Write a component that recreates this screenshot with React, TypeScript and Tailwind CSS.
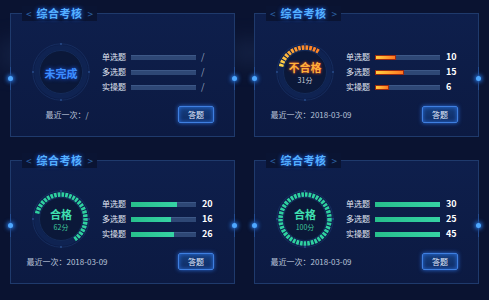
import React from 'react';

type Status = 'none' | 'fail' | 'pass';

interface Exam {
  status: Status;
  label: string;
  score?: string;
  ring: number;
  values: string[];
  pcts: number[];
  date: string;
}

const exams: Exam[] = [
  { status: 'none', label: '未完成', ring: 0, values: ['/', '/', '/'], pcts: [0, 0, 0], date: '/' },
  { status: 'fail', label: '不合格', score: '31分', ring: 0.31, values: ['10', '15', '6'], pcts: [0.32, 0.45, 0.21], date: '2018-03-09' },
  { status: 'pass', label: '合格', score: '62分', ring: 0.62, values: ['20', '16', '26'], pcts: [0.7, 0.62, 0.66], date: '2018-03-09' },
  { status: 'pass', label: '合格', score: '100分', ring: 1, values: ['30', '25', '45'], pcts: [1, 1, 1], date: '2018-03-09' },
];

const rows = ['单选题', '多选题', '实操题'];

// arc from -77deg (measured clockwise from 12 o'clock)
const arcPath = (pct: number, cx: number, cy: number, r: number) => {
  const a0 = ((-77 - 90) * Math.PI) / 180;
  const a1 = a0 + pct * 2 * Math.PI;
  const x0 = cx + r * Math.cos(a0);
  const y0 = cy + r * Math.sin(a0);
  const x1 = cx + r * Math.cos(a1);
  const y1 = cy + r * Math.sin(a1);
  const large = pct > 0.5 ? 1 : 0;
  return `M ${x0} ${y0} A ${r} ${r} 0 ${large} 1 ${x1} ${y1}`;
};

const Ring: React.FC<{ exam: Exam; id: number }> = ({ exam, id }) => {
  const color = exam.status === 'fail' ? `url(#g${id})` : '#2fd19f';
  return (
    <div className="relative w-[58px] h-[58px] shrink-0">
      <svg width="58" height="58" viewBox="0 0 58 58" className="absolute inset-0">
        <defs>
          <linearGradient id={`g${id}`} x1="0" y1="1" x2="1" y2="0">
            <stop offset="0" stopColor="#ffd84a" />
            <stop offset="1" stopColor="#ff7a22" />
          </linearGradient>
        </defs>
        <circle cx="29" cy="29" r="28.2" fill="none" stroke="#1a3468" strokeWidth="0.7" />
        <circle cx="29" cy="29" r="24.5" fill="none" stroke="#0f2352" strokeWidth="5" />
        <circle cx="29" cy="29" r="21.5" fill="#0b1839" stroke="#17305f" strokeWidth="0.8" />
        {exam.ring >= 1 ? (
          <circle cx="29" cy="29" r="24.5" fill="none" stroke={color} strokeWidth="4.5" strokeDasharray="2.6 1.1" />
        ) : exam.ring > 0 ? (
          <path d={arcPath(exam.ring, 29, 29, 24.5)} fill="none" stroke={color} strokeWidth="4.5" strokeDasharray="2.6 1.1" />
        ) : null}
        <circle cx="29" cy="1" r="0.9" fill="#2b4f90" />
        <circle cx="29" cy="57" r="0.9" fill="#2b4f90" />
        <circle cx="1" cy="29" r="0.9" fill="#2b4f90" />
        <circle cx="57" cy="29" r="0.9" fill="#2b4f90" />
      </svg>
      <div className="absolute inset-0 flex flex-col items-center justify-center pt-[2px]">
        {exam.status === 'none' && (
          <span className="block text-[11px] leading-[13px] font-bold text-[#3d8fff] [text-shadow:0_0_4px_#1f5fff]">{exam.label}</span>
        )}
        {exam.status === 'fail' && (
          <>
            <span className="block text-[11px] leading-[13px] font-bold text-[#ffb03a] [text-shadow:0_0_3px_#ff4a1a]">{exam.label}</span>
            <span className="block mt-[2px] text-[7px] leading-[9px] text-[#c9cfdc]">{exam.score}</span>
          </>
        )}
        {exam.status === 'pass' && (
          <>
            <span className="block text-[11px] leading-[13px] font-bold text-[#3fe0b0]">{exam.label}</span>
            <span className="block mt-[2px] text-[7px] leading-[9px] text-[#3fc79c]">{exam.score}</span>
          </>
        )}
      </div>
    </div>
  );
};

const SideDot: React.FC<{ side: 'left' | 'right' }> = ({ side }) => (
  <div
    className={`absolute top-[53px] ${side === 'left' ? 'left-[-3px]' : 'right-[-3px]'} flex flex-col items-center w-[5px]`}
  >
    <div className="w-px h-[7px] bg-[#234c90]" />
    <div className="w-[5px] h-[5px] rounded-full bg-[#4fa8ff] shadow-[0_0_4px_1px_#2a7ff0] my-[2px]" />
    <div className="w-px h-[7px] bg-[#234c90]" />
  </div>
);

const Card: React.FC<{ exam: Exam; id: number }> = ({ exam, id }) => (
  <div className="relative w-[225px] h-[124px] border border-[#1f3a6c] bg-gradient-to-b from-[#0e1f4c] to-[#0c1a42]">
    <div className="absolute top-[-8px] left-[11px] h-[15px] px-[4px] flex items-center gap-[5px] bg-[#0a1433]">
      <span className="text-[10px] text-[#2f64a8]">&lt;</span>
      <span className="text-[11px] font-bold tracking-[0.5px] text-[#55b0ff] [text-shadow:0_0_4px_#1d6bff]">综合考核</span>
      <span className="text-[10px] text-[#2f64a8]">&gt;</span>
    </div>
    <SideDot side="left" />
    <SideDot side="right" />

    <div className="flex items-center pl-[21px] pt-[29px]">
      <Ring exam={exam} id={id} />
      <div className="ml-[12px] flex flex-col">
        {rows.map((r, i) => (
          <div key={r} className="h-[15px] flex items-center">
            <span className="w-[29px] text-[8px] text-[#e2e8f4]">{r}</span>
            <div className="relative w-[65px] h-[5px] bg-[#2e4775] border-t border-[#3d5887]">
              {exam.pcts[i] > 0 && (
                <div
                  className={
                    exam.status === 'fail'
                      ? 'absolute left-0 top-[-1px] h-[5px] bg-gradient-to-r from-[#ffd040] to-[#ff7420] border border-[#9a2a12]'
                      : 'absolute left-0 top-[-1px] h-[5px] bg-gradient-to-r from-[#27bf8c] to-[#36d3a4]'
                  }
                  style={{ width: `${exam.pcts[i] * 100}%` }}
                />
              )}
            </div>
            <span
              className={
                exam.status === 'none'
                  ? 'ml-[5px] text-[9px] text-[#9aa6bf]'
                  : 'ml-[6px] text-[9px] font-bold text-white'
              }
            >
              {exam.values[i]}
            </span>
          </div>
        ))}
      </div>
    </div>

    <div className="mt-[5px] flex items-center justify-between pr-[20px]">
      <div className="w-[112px] flex justify-center text-[8px] text-[#b9c3d8]">
        <span>最近一次：{exam.date}</span>
      </div>
      <button className="w-[36px] h-[17px] flex items-center justify-center rounded-[2px] border border-[#3f7fe0] bg-gradient-to-b from-[#163f80] to-[#0f2c64] shadow-[0_0_4px_#2a6cd8,inset_0_0_4px_#2a6cd8] text-[8px] text-[#e4eeff]">
        答题
      </button>
    </div>
  </div>
);

export default function App() {
  return (
    <div className="w-[489px] h-[300px] overflow-hidden bg-[#0a1331] font-['Noto_Sans_CJK_SC',sans-serif] relative">
      <div className="absolute left-0 top-[40px] w-[60px] h-[30px] bg-[#1a2a50] blur-[10px] opacity-60" />
      <div className="absolute left-[230px] top-[40px] w-[40px] h-[25px] bg-[#1a2a50] blur-[10px] opacity-60" />
      <div className="relative grid grid-cols-[225px_225px] gap-x-[19px] gap-y-[23px] pl-[10px] pt-[13px]">
        {exams.map((e, i) => (
          <Card key={i} exam={e} id={i} />
        ))}
      </div>
    </div>
  );
}
